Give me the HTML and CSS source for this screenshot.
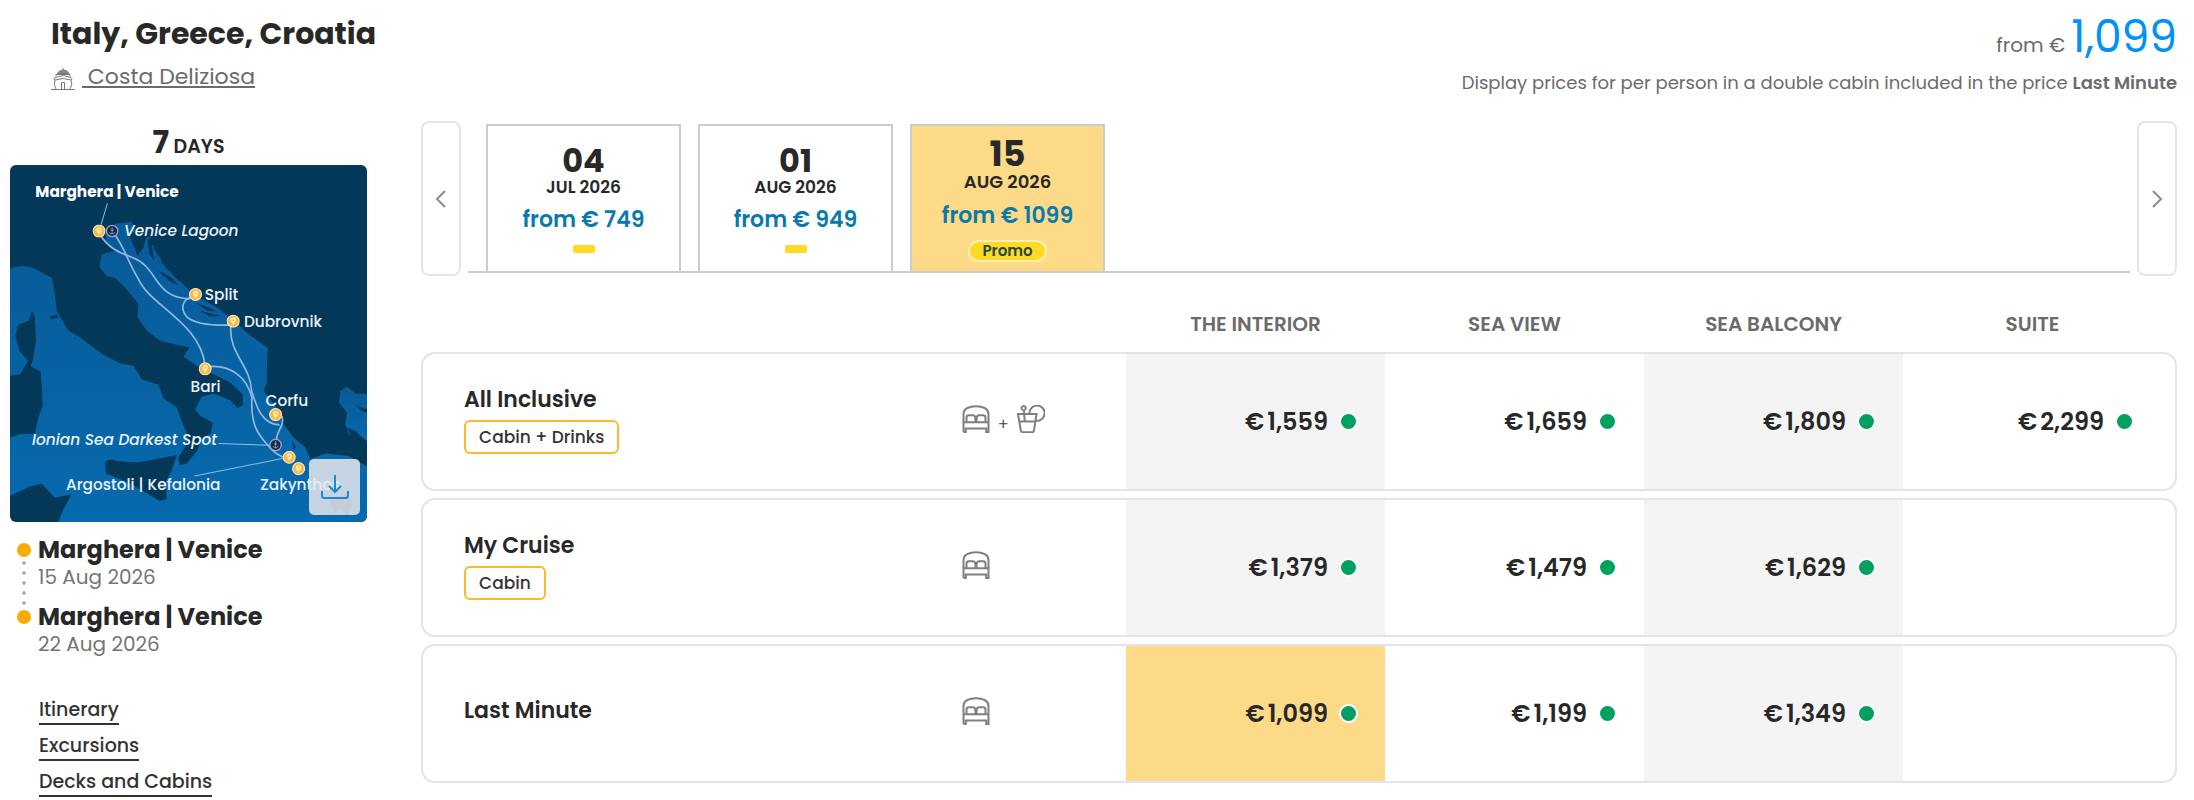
FILE: index.html
```html
<!DOCTYPE html>
<html lang="en">
<head>
  <meta charset="UTF-8">
  <meta name="viewport" content="width=device-width, initial-scale=1.0">
  <title>Italy, Greece, Croatia</title>
  <link rel="stylesheet" href="styles.css">
</head>
<body>
  <!-- shared icons -->
  <svg class="sprite" aria-hidden="true">
    <symbol id="icon-bed" viewBox="0 0 28 28">
      <path d="M1.5 27V9C1.5 4 7 1.2 14 1.2S26.500 4 26.500 9V27H24.200V23.600H3.800V27H1.500M1.500 17.200H26.500M4.500 17V12.500Q4.500 10.200 7 10.200H10.500Q13 10.200 13.300 12.500L13.600 17M14.400 17L14.700 12.500Q15 10.200 17.500 10.200H21Q23.500 10.200 23.500 12.500V17"/>
    </symbol>
    <symbol id="icon-drink" viewBox="0 0 28 28">
      <path d="M1 9H19.500L17 25.500Q16.800 27.200 15 27.200H5.800Q4 27.200 3.800 25.500ZM2.200 16.500H18.400M7.800 16.300L6.800 5.200M6.600 5.200A2.100 2.100 0 1 1 6.700 5.200M12.500 9A7.600 7.600 0 1 1 18.800 15.700M12.500 9A7.600 7.600 0 0 1 14 3.500"/>
    </symbol>
    <symbol id="icon-pin" viewBox="-20 -20 40 40">
      <circle r="18" fill="#fdb93c" stroke="#fff2d2" stroke-width="3"/>
      <path d="M0 11C-3 6-8 2-8-3A8 8 0 0 1 8-3C8 2 3 6 0 11Z" fill="#fff0cf"/>
      <circle cy="-3" r="3" fill="#fdb93c"/>
    </symbol>
    <symbol id="icon-anchor" viewBox="-20 -20 40 40">
      <circle r="17" fill="#14284f" stroke="#98a5c4" stroke-width="4"/>
      <path d="M0-7V9M-5-3H5M-8 3Q-6 9 0 9T8 3" fill="none" stroke="#b9c1d6" stroke-width="2"/>
      <circle cy="-9" r="2" fill="#b9c1d6"/>
    </symbol>
  </svg>

  <header class="header">
    <div class="header-title">
      <h1>Italy, Greece, Croatia</h1>
      <div class="ship">
        <svg class="ship-icon" viewBox="0 0 24 24" aria-hidden="true">
          <path d="M6 6.500Q8 3.500 12 3T18 6.500ZM12 1V3" fill="#8a8a8a"/>
          <path d="M5 9.500V7.500H19V9.500M4 13Q1.500 12 4 10.500L12 8.500L20 10.500Q22.500 12 20 13L12 11.500ZM4 13Q2 18 5 22M20 13Q22 18 19 22M10.500 22V15.500H13.500V22M0 22.500H24"/>
        </svg>
        <a href="#ship">&nbsp;Costa Deliziosa</a>
      </div>
    </div>
    <div class="header-price">
      <p class="price-from">from € <span>1,099</span></p>
      <p class="price-note">Display prices for per person in a double cabin included in the price <strong>Last Minute</strong></p>
    </div>
  </header>

  <main class="main">
    <aside class="sidebar">
      <p class="days"><b>7</b> DAYS</p>
      <div class="map">
        <svg class="map-image" viewBox="30 13 1070 1070" role="img" aria-label="Cruise route">
          <defs>
            <linearGradient id="sea" x1="0" y1="0" x2="0" y2="1">
              <stop offset="0" stop-color="#095a96"/>
              <stop offset="1" stop-color="#066aae"/>
            </linearGradient>
          </defs>
          <rect x="30" y="13" width="1070" height="1070" fill="#043859"/>
          <!-- seas -->
          <path fill="url(#sea)" d="M30 325Q60 308 100 322L156 352L164 400L170 450L205 510L240 530L310 582L360 608L400 615L425 655L475 672L490 712L530 740L545 780L563 826L560 850L534 890L540 912L560 908L590 870L605 835L632 816L638 785L600 765L585 745L604 708L640 698L690 718L712 741L728 733L727 700L690 665L640 640L590 615L550 588L568 560L530 552L480 540L440 510L412 470L415 430L375 380L345 352L318 345L298 318L305 280L345 270L320 250L315 215L345 190L395 182L405 210L388 226L405 265L412 285L430 262L437 232L455 225L465 242L460 262L490 306L520 345L560 380L600 412L650 440L700 478L745 520L780 545L803 562L800 610L800 665L790 690L800 705L830 740L850 790L880 830L915 860L930 895L975 878L1045 885L1100 917V1083H175L190 1045L215 1000L165 1010L125 968L92 976L30 1004V830L60 820L105 818L115 770L128 735L125 675L122 632L92 617L98 600L108 540L104 465L96 452L86 480L55 492L46 525L58 570L84 600L60 640L30 645Z"/>
          <path fill="url(#sea)" d="M1100 700L1065 698L1040 678L1020 690L1016 725L1040 755L1035 790L1045 820L1080 845L1100 855Z"/>
          <!-- islands and headlands -->
          <path fill="#043859" d="M315 905Q325 890 350 900L410 905L450 898L530 882L512 935L497 960L500 1015L478 1020L445 1000L385 965L318 938ZM442 240L455 225L475 245L484 290L470 278L465 250L455 255L462 300L448 280ZM480 280L500 310L517 325L505 330L485 305ZM475 330L510 348L535 372L520 368L490 346ZM585 425L625 440L650 452L620 448ZM600 450L640 460L665 465L630 467ZM148 468L170 462L175 470L155 475ZM845 765L875 795L888 822L865 810L850 785ZM875 838L888 860L880 865ZM850 870L875 875L890 895L865 900Z"/>
          <path fill="#043859" d="M1040 800L1065 810L1100 842V862L1060 845ZM1070 735L1100 745V755L1080 748ZM985 1010L1040 1000L1060 1030L1040 1065L1020 1040L1005 1060Z"/>
          <!-- course of the ship -->
          <g fill="none" stroke="#93b8e4" stroke-width="5">
            <path d="M300 222C330 270 370 278 400 292C475 320 460 412 570 414"/>
            <path d="M340 215C380 270 375 290 415 355C450 435 600 485 615 615"/>
            <path d="M575 408C545 418 540 445 560 468Q590 495 690 493"/>
            <path d="M692 495C685 580 750 610 754 690C770 740 785 790 838 792"/>
            <path d="M620 618C690 608 740 650 755 710C750 800 780 825 800 850Q830 888 865 893"/>
            <path d="M845 765C855 800 825 805 828 850"/>
          </g>
          <path d="M322 128L303 192M655 848L810 853M583 945L850 892" fill="none" stroke="#8fbce0" stroke-width="3"/>
          <g>
            <use href="#icon-pin" x="277" y="191" width="40" height="40"/>
            <use href="#icon-anchor" x="316" y="191" width="40" height="40"/>
            <use href="#icon-pin" x="566" y="381" width="40" height="40"/>
            <use href="#icon-pin" x="679" y="461" width="40" height="40"/>
            <use href="#icon-pin" x="595" y="604" width="40" height="40"/>
            <use href="#icon-pin" x="806" y="741" width="40" height="40"/>
            <use href="#icon-anchor" x="806" y="832" width="40" height="40"/>
            <use href="#icon-pin" x="847" y="869" width="40" height="40"/>
            <use href="#icon-pin" x="875" y="903" width="40" height="40"/>
          </g>
          <g class="map-labels">
            <text class="port" x="106" y="108">Marghera | Venice</text>
            <text class="spot" x="372" y="225">Venice Lagoon</text>
            <text x="614" y="417">Split</text>
            <text x="731" y="499">Dubrovnik</text>
            <text x="571" y="694">Bari</text>
            <text x="796" y="735">Corfu</text>
            <text class="spot" x="96" y="852">Ionian Sea Darkest Spot</text>
            <text x="198" y="988">Argostoli | Kefalonia</text>
            <text x="780" y="988">Zakynthos</text>
          </g>
        </svg>
        <button class="map-download" type="button" aria-label="Download map">
          <svg viewBox="0 0 28 26" aria-hidden="true">
            <path d="M14 1V18M8 12L14 18L20 12M1 17V21.500Q1 24 3.500 24H24.500Q27 24 27 21.500V17"/>
          </svg>
        </button>
      </div>

      <ol class="route">
        <li><strong>Marghera | Venice</strong><span>15 Aug 2026</span></li>
        <li><strong>Marghera | Venice</strong><span>22 Aug 2026</span></li>
      </ol>

      <nav class="links">
        <a href="#itinerary">Itinerary</a>
        <a href="#excursions">Excursions</a>
        <a href="#decks">Decks and Cabins</a>
      </nav>
    </aside>

    <section class="offers">
      <div class="dates">
        <button class="arrow" type="button" aria-label="Previous dates">
          <svg viewBox="0 0 12 18" aria-hidden="true"><path d="M10 1L2 9L10 17"/></svg>
        </button>
        <div class="date-list">
          <button class="date" type="button">
            <span class="date-day">04</span>
            <span class="date-month">JUL 2026</span>
            <span class="date-price">from € 749</span>
            <span class="date-mark"></span>
          </button>
          <button class="date" type="button">
            <span class="date-day">01</span>
            <span class="date-month">AUG 2026</span>
            <span class="date-price">from € 949</span>
            <span class="date-mark"></span>
          </button>
          <button class="date date-active" type="button">
            <span class="date-day">15</span>
            <span class="date-month">AUG 2026</span>
            <span class="date-price">from € 1099</span>
            <span class="date-promo">Promo</span>
          </button>
        </div>
        <button class="arrow" type="button" aria-label="Next dates">
          <svg viewBox="0 0 12 18" aria-hidden="true"><path d="M2 1L10 9L2 17"/></svg>
        </button>
      </div>

      <table class="prices">
        <colgroup>
          <col class="col-name">
          <col class="col-icons">
          <col class="col-price">
          <col class="col-price">
          <col class="col-price">
          <col>
        </colgroup>
        <thead>
          <tr>
            <td></td>
            <td></td>
            <th scope="col">THE INTERIOR</th>
            <th scope="col">SEA VIEW</th>
            <th scope="col">SEA BALCONY</th>
            <th scope="col">SUITE</th>
          </tr>
        </thead>
        <tbody>
          <tr>
            <th scope="row">All Inclusive<br><span class="tag">Cabin + Drinks</span></th>
            <td class="icons"><div><svg><use href="#icon-bed"/></svg><span>+</span><svg><use href="#icon-drink"/></svg></div></td>
            <td class="price shaded"><span>€</span>1,559<i></i></td>
            <td class="price"><span>€</span>1,659<i></i></td>
            <td class="price shaded"><span>€</span>1,809<i></i></td>
            <td class="price"><span>€</span>2,299<i></i></td>
          </tr>
          <tr>
            <th scope="row">My Cruise<br><span class="tag">Cabin</span></th>
            <td class="icons"><div><svg><use href="#icon-bed"/></svg></div></td>
            <td class="price shaded"><span>€</span>1,379<i></i></td>
            <td class="price"><span>€</span>1,479<i></i></td>
            <td class="price shaded"><span>€</span>1,629<i></i></td>
            <td class="price"></td>
          </tr>
          <tr>
            <th scope="row">Last Minute</th>
            <td class="icons"><div><svg><use href="#icon-bed"/></svg></div></td>
            <td class="price selected"><span>€</span>1,099<i></i></td>
            <td class="price"><span>€</span>1,199<i></i></td>
            <td class="price shaded"><span>€</span>1,349<i></i></td>
            <td class="price"></td>
          </tr>
        </tbody>
      </table>
    </section>
  </main>
</body>
</html>
```

FILE: styles.css
```css
* {
  box-sizing: border-box;
}

body {
  margin: 0;
  padding: 13px 17px 0 10px;
  background: #fff;
  color: #282828;
  font-family: Poppins, Inter, sans-serif;
}

h1, p, ol {
  margin: 0;
  padding: 0;
}

button {
  font-family: inherit;
  color: inherit;
  cursor: pointer;
}

svg {
  display: block;
}

.sprite {
  position: absolute;
  width: 0;
  height: 0;
}

/* header */
.header {
  display: flex;
  justify-content: space-between;
  margin-bottom: 26px;
}

.header-title {
  padding: 3px 0 0 41px;
}

h1 {
  font-size: 30px;
  line-height: 36px;
  font-weight: 700;
}

.ship {
  display: flex;
  align-items: center;
  gap: 7px;
  margin-top: 8px;
}

.ship-icon {
  width: 24px;
  height: 24px;
  margin-top: 4px;
  fill: none;
  stroke: #7a7a7a;
}

.ship a {
  color: #6b6b6b;
  font-size: 22px;
  line-height: 34px;
}

.header-price {
  text-align: right;
  color: #6b6b6b;
}

.price-from {
  display: flex;
  justify-content: flex-end;
  align-items: baseline;
  gap: 6px;
  font-size: 20px;
  line-height: 24px;
}

.price-from span {
  color: #0092f4;
  font-size: 44px;
  line-height: 48px;
  font-weight: 400;
}

.price-note {
  margin-top: 10px;
  font-size: 18px;
  line-height: 24px;
}

.price-note strong {
  font-weight: 600;
}

.main {
  display: flex;
  gap: 54px;
}

/* left column */
.sidebar {
  width: 357px;
  flex: none;
  padding-top: 5px;
}

.days {
  font-size: 19px;
  line-height: 20px;
  font-weight: 600;
  text-align: center;
}

.days b {
  font-size: 31px;
  line-height: 32px;
  font-weight: 700;
}

.map {
  position: relative;
  margin-top: 7px;
  border-radius: 6px;
  overflow: hidden;
}

.map-image {
  width: 100%;
}

.map-labels {
  fill: #eaf3fb;
  font-size: 46px;
  font-weight: 500;
}

.map-labels .port {
  fill: #fff;
  font-weight: 700;
}

.map-labels .spot {
  font-style: italic;
}

.map-download {
  position: absolute;
  right: 7px;
  bottom: 7px;
  display: flex;
  align-items: center;
  justify-content: center;
  width: 51px;
  height: 56px;
  padding: 0;
  border: 0;
  border-radius: 5px;
  background: rgba(232, 232, 236, .85);
}

.map-download svg {
  width: 28px;
  height: 26px;
  fill: none;
  stroke: #1b87d6;
  stroke-width: 2;
}

.route {
  margin-top: 14px;
  padding-left: 28px;
  list-style: none;
}

.route li {
  position: relative;
  padding-bottom: 12px;
}

.route li::before {
  content: "";
  position: absolute;
  top: 7px;
  left: -21px;
  width: 14px;
  height: 14px;
  border-radius: 50%;
  background: #f9ab00;
}

.route li:first-child::after {
  content: "";
  position: absolute;
  top: 22px;
  bottom: -6px;
  left: -16px;
  width: 4px;
  background: radial-gradient(circle, #adb5bd 2px, transparent 2px) 0 0 / 4px 10px;
}

.route strong, .route span {
  display: block;
}

.route strong {
  font-size: 24px;
  line-height: 28px;
  font-weight: 700;
}

.route span {
  color: #757575;
  font-size: 20px;
  line-height: 27px;
}

.links {
  display: flex;
  flex-direction: column;
  align-items: flex-start;
  gap: 8px;
  margin-top: 27px;
  padding-left: 29px;
}

.links a {
  color: #333;
  border-bottom: 2px solid #333;
  font-size: 19px;
  line-height: 26px;
  font-weight: 500;
  text-decoration: none;
}

/* departure dates */
.offers {
  flex: 1;
  min-width: 0;
}

.dates {
  display: flex;
  gap: 7px;
}

.arrow {
  display: flex;
  align-items: center;
  justify-content: center;
  width: 40px;
  height: 155px;
  flex: none;
  padding: 0;
  border: 2px solid #e5e5e5;
  border-radius: 8px;
  background: #fff;
}

.arrow svg {
  width: 12px;
  height: 18px;
  fill: none;
  stroke: #8c8c8c;
  stroke-width: 2;
}

.date-list {
  display: flex;
  flex: 1;
  gap: 17px;
  margin: 3px 0;
  padding-left: 18px;
  border-bottom: 2px solid #ccc;
}

.date {
  display: flex;
  flex-direction: column;
  align-items: center;
  justify-content: center;
  width: 195px;
  padding: 0;
  border: 2px solid #ccc;
  border-bottom: 0;
  background: #fff;
}

.date-day {
  font-size: 32px;
  line-height: 32px;
  font-weight: 700;
}

.date-month {
  font-size: 17px;
  line-height: 20px;
  font-weight: 600;
}

.date-price {
  margin-top: 7px;
  color: #0a7aad;
  font-size: 22px;
  line-height: 32px;
  font-weight: 600;
}

.date-mark {
  width: 22px;
  height: 8px;
  margin-top: 9px;
  border-radius: 2px;
  background: #fedb22;
}

.date-active {
  padding-top: 2px;
  background: #fcda87;
}

.date-active .date-day {
  font-size: 35px;
  line-height: 34px;
}

.date-active .date-month {
  font-size: 18px;
  line-height: 22px;
}

.date-promo {
  margin-top: 8px;
  padding: 0 12px;
  border: 2px solid #fff0b8;
  border-radius: 12px;
  background: #fedb22;
  color: #23484a;
  font-size: 15px;
  line-height: 18px;
  font-weight: 600;
}

/* price table */
.prices {
  width: 100%;
  table-layout: fixed;
  border-collapse: separate;
  border-spacing: 0 7px;
}

.col-name {
  width: 30.8%;
}

.col-icons {
  width: 9.35%;
}

.col-price {
  width: 14.75%;
}

.prices th, .prices td {
  padding: 0;
}

.prices thead th {
  padding-top: 20px;
  color: #6b6b6b;
  font-size: 20px;
  line-height: 42px;
  font-weight: 600;
}

.prices tbody th, .prices tbody td {
  height: 139px;
  border: solid #e0e5e9;
  border-width: 2px 0;
}

.prices tbody th {
  padding: 0 0 5px 41px;
  border-left-width: 2px;
  border-radius: 14px 0 0 14px;
  font-size: 22px;
  line-height: 32px;
  font-weight: 600;
  text-align: left;
}

.prices tbody td:last-child {
  border-right-width: 2px;
  border-radius: 0 14px 14px 0;
}

.prices th:last-child {
  padding-right: 15px;
}

.tag {
  display: inline-block;
  margin-top: 4px;
  padding: 0 13px;
  border: 2px solid #fdb92c;
  border-radius: 6px;
  color: #333;
  font-size: 17px;
  line-height: 30px;
  font-weight: 500;
}

.icons div {
  display: flex;
  align-items: flex-end;
  gap: 8px;
  padding-bottom: 6px;
}

.icons svg {
  width: 28px;
  height: 28px;
  fill: none;
  stroke: #7d8083;
  stroke-width: 2;
}

.icons span {
  color: #54585c;
  font-size: 16px;
  line-height: 16px;
}

.prices .price {
  padding-right: 27px;
  font-size: 24px;
  font-weight: 600;
  text-align: right;
  white-space: nowrap;
}

.prices .price:last-child {
  padding-right: 41px;
}

.price span {
  margin-right: 3px;
}

/* availability dot */
.price i {
  display: inline-block;
  width: 19px;
  height: 19px;
  margin-left: 11px;
  border: 2px solid #fff;
  border-radius: 50%;
  background: #00a160;
  vertical-align: -1px;
}

.shaded {
  background: #f4f4f4;
}

.selected {
  background: #fcda87;
}
```
